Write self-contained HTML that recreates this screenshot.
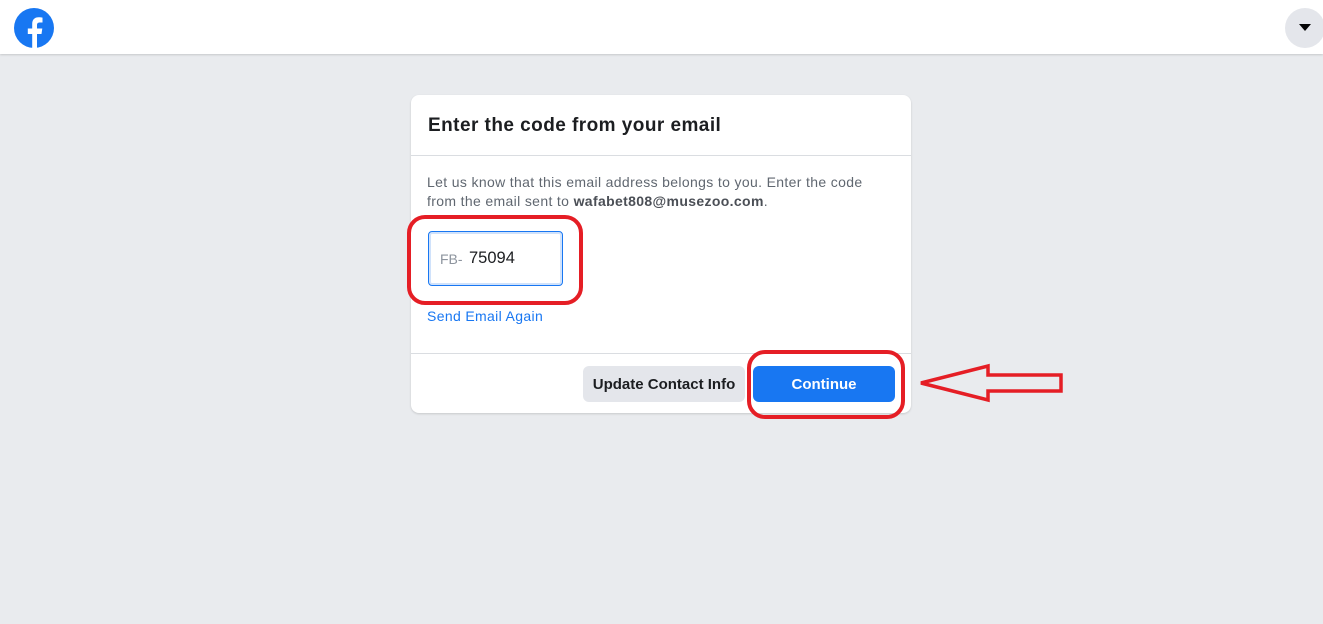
<!DOCTYPE html>
<html><head><style>
body{margin:0;width:1323px;height:624px;background:#e9ebee;font-family:"Liberation Sans",Arial,sans-serif;position:relative;overflow:hidden}
.top{position:absolute;left:0;top:0;width:1323px;height:54px;background:#fff;box-shadow:0 1px 2px rgba(0,0,0,.15)}
.card{position:absolute;left:411px;top:95px;width:500px;height:318px;background:#fff;border-radius:8px;box-shadow:0 1px 2px rgba(0,0,0,.15)}
.h{position:absolute;left:17px;top:20px;font-size:19px;letter-spacing:0.45px;font-weight:bold;color:#1c1e21;white-space:nowrap}
.hr{position:absolute;left:0;width:500px;height:1px;background:#dadde1}
.p{position:absolute;left:16px;top:78px;width:455px;font-size:14px;letter-spacing:0.35px;line-height:19px;color:#606770}
.inp{position:absolute;left:17px;top:136px;width:135px;height:55px;box-sizing:border-box;border:1px solid #1877f2;border-radius:4px;box-shadow:0 0 0 2px #d0e2fb inset}
.fb{position:absolute;left:11px;top:19px;font-size:14px;color:#8d949e}
.code{position:absolute;left:40px;top:17px;font-size:16.5px;color:#1c1e21}
.link{position:absolute;left:16px;top:213px;font-size:14px;letter-spacing:0.35px;color:#1877f2}
.b1{position:absolute;left:172px;top:271px;width:162px;height:36px;background:#e4e6eb;border-radius:6px;font-size:15px;font-weight:bold;color:#1c1e21;text-align:center;line-height:38px;white-space:nowrap}
.b2{position:absolute;left:342px;top:271px;width:142px;height:36px;background:#1877f2;border-radius:6px;font-size:15px;font-weight:bold;color:#fff;text-align:center;line-height:38px}
.ring{position:absolute;border:4px solid #e51e25;border-radius:18px;box-sizing:border-box}
</style></head><body>
<div class="top">
<svg style="position:absolute;left:14px;top:8px" width="40" height="40" viewBox="0 0 40 40"><circle cx="20" cy="20" r="20" fill="#1877f2"/><path d="M23 40V26h4.5l.8-5.5H23v-3.3c0-1.6.6-2.7 2.8-2.7h2.7V9.6c-.5-.1-2.1-.3-3.9-.3-3.9 0-6.4 2.3-6.4 6.6v4.6h-4.4V26h4.4v14z" fill="#fff"/></svg>
<div style="position:absolute;left:1285px;top:8px;width:40px;height:40px;border-radius:50%;background:#e4e6eb"></div>
<div style="position:absolute;left:1299px;top:24px;width:0;height:0;border-left:6px solid transparent;border-right:6px solid transparent;border-top:7px solid #050505"></div>
</div>
<div class="card">
<div class="h">Enter the code from your email</div>
<div class="hr" style="top:60px"></div>
<div class="p">Let us know that this email address belongs to you. Enter the code from the email sent to <b style="color:#4b4f56">wafabet808@musezoo.com</b>.</div>
<div class="inp"><span class="fb">FB-</span><span class="code">75094</span></div>
<div class="link">Send Email Again</div>
<div class="hr" style="top:258px"></div>
<div class="b1">Update Contact Info</div>
<div class="b2">Continue</div>
</div>
<div class="ring" style="left:407px;top:215px;width:176px;height:90px"></div>
<div class="ring" style="left:747px;top:350px;width:158px;height:69px"></div>
<svg style="position:absolute;left:0;top:0" width="1323" height="624"><polygon points="921,383 988,366 988,375 1061,375 1061,391 988,391 988,400" fill="none" stroke="#e51e25" stroke-width="3.5"/></svg>
</body></html>
